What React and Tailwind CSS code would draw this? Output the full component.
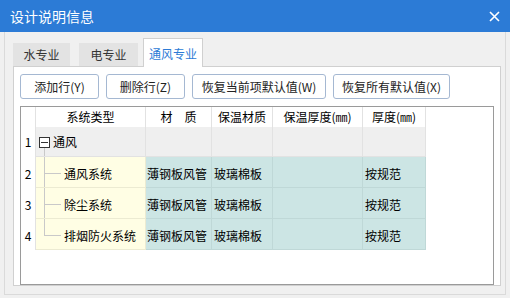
export default function App() {
  const cols = [110, 66, 61, 90, 63];
  const rows = [
    { n: 2, name: "通风系统", last: false },
    { n: 3, name: "除尘系统", last: false },
    { n: 4, name: "排烟防火系统", last: true },
  ];
  const line = "border-[#c9c9c9]";
  return (
    <div className="w-[510px] h-[298px] bg-[#f0f0f0] flex flex-col overflow-hidden font-['Noto_Sans_CJK_SC',sans-serif] text-[12px] text-black">
      <div className="h-[32px] shrink-0 bg-[#2c7bd6] flex items-center justify-between pl-[10px] pr-[10px] text-white text-[14px]">
        <span>设计说明信息</span>
        <svg width="11" height="11" viewBox="0 0 11 11">
          <path d="M1 1L10 10M10 1L1 10" stroke="white" strokeWidth="1.6" />
        </svg>
      </div>
      <div className="flex-1 px-[4px] pb-[3px] flex flex-col min-h-0">
        <div className="flex-1 border-x border-b border-[#dadada] pl-[8px] pr-[4px] pt-[6px] pb-[8px] flex flex-col min-h-0">
          <div className="h-[28px] shrink-0 flex items-end">
            <div className="w-[57px] h-[23px] bg-[#e3e3e3] flex items-center justify-center text-[#333]">水专业</div>
            <div className="ml-[9px] w-[59px] h-[23px] bg-[#e3e3e3] flex items-center justify-center text-[#333]">电专业</div>
            <div className="ml-[5px] w-[60px] h-[29px] -mb-[1px] relative z-10 bg-white border-t border-x border-[#d0d0d0] flex items-center justify-center text-[#2c7bd6] pt-[2px]">通风专业</div>
          </div>
          <div className="flex-1 bg-white border border-[#d0d0d0] pt-[7px] pl-[6px] pr-[6px] flex flex-col min-h-0">
            <div className="flex gap-[7px] h-[25px] shrink-0">
              {[
                ["添加行(Y)", 79],
                ["删除行(Z)", 79],
                ["恢复当前项默认值(W)", 134],
                ["恢复所有默认值(X)", 117],
              ].map(([t, w]) => (
                <div
                  key={t}
                  style={{ width: w }}
                  className="h-[25px] bg-white border border-[#a5b8d2] rounded-[3px] flex items-center justify-center text-[#222]"
                >
                  {t}
                </div>
              ))}
            </div>
            <div className="mt-[7px] flex-1 border border-[#9a9a9a] flex flex-col min-h-0">
              {/* header */}
              <div className="flex h-[20px] shrink-0">
                <div className="w-[15px] border-r border-[#e2e2e2]" />
                {["系统类型", "材　质", "保温材质", "保温厚度(㎜)", "厚度(㎜)"].map((t, i) => (
                  <div
                    key={t}
                    style={{ width: cols[i] }}
                    className="border-r border-[#e2e2e2] flex items-center justify-center"
                  >
                    {t}
                  </div>
                ))}
              </div>
              {/* row 1 */}
              <div className="flex h-[30px] shrink-0">
                <div className="w-[15px] border-r border-[#e2e2e2] flex items-center justify-center">1</div>
                <div style={{ width: cols[0] }} className="bg-[#efefef] border-r border-b border-[#e2e2e2] flex items-stretch pl-[3px]">
                  <div className="w-[11px] flex flex-col items-center">
                    <div className="h-[10px]" />
                    <div className="w-[11px] h-[11px] border border-[#333] flex items-center justify-center bg-white">
                      <div className="w-[7px] h-[1px] bg-[#333]" />
                    </div>
                    <div className={`flex-1 w-0 border-l ${line}`} />
                  </div>
                  <div className="ml-[3px] flex items-center">通风</div>
                </div>
                {cols.slice(1).map((w, i) => (
                  <div key={i} style={{ width: w }} className="bg-[#efefef] border-r border-b border-[#e2e2e2]" />
                ))}
              </div>
              {rows.map((r) => (
                <div key={r.n} className="flex h-[31px] shrink-0">
                  <div className="w-[15px] border-r border-[#e2e2e2] flex items-center justify-center pt-[3px]">{r.n}</div>
                  <div style={{ width: cols[0] }} className="bg-[#fffee4] border-r border-b border-[#ecebd2] flex items-stretch pl-[8px]">
                    <div className="w-[17px] flex flex-col">
                      <div className={`h-[17px] border-l border-b ${line}`} />
                      <div className={`flex-1 ${r.last ? "" : `border-l ${line}`}`} />
                    </div>
                    <div className="ml-[3px] flex items-center pt-[3px]">{r.name}</div>
                  </div>
                  <div style={{ width: cols[1] }} className="bg-[#cce5e4] border-r border-b border-[#bfd8d7] flex items-center pl-[1px] pt-[3px]">薄钢板风管</div>
                  <div style={{ width: cols[2] }} className="bg-[#cce5e4] border-r border-b border-[#bfd8d7] flex items-center pl-[2px] pt-[3px]">玻璃棉板</div>
                  <div style={{ width: cols[3] }} className="bg-[#cce5e4] border-r border-b border-[#bfd8d7]" />
                  <div style={{ width: cols[4] }} className="bg-[#cce5e4] border-r border-b border-[#bfd8d7] flex items-center pl-[2px] pt-[3px]">按规范</div>
                </div>
              ))}
              <div className="flex-1" />
            </div>
          </div>
        </div>
      </div>
    </div>
  );
}
